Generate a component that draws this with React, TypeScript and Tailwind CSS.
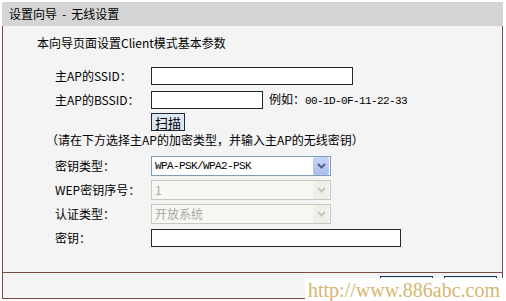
const cjk = "font-['Noto_Sans_CJK_SC','Noto_Sans',sans-serif]";
const mono = "font-['Liberation_Mono','Noto_Sans_CJK_SC',monospace]";

function Chevron({ color }: { color: string }) {
  return (
    <svg width="9" height="6" viewBox="0 0 9 6">
      <path d="M1 1 L4.5 4.5 L8 1" fill="none" stroke={color} strokeWidth="2" />
    </svg>
  );
}

function Select({ value, disabled, monoText }: { value: string; disabled?: boolean; monoText?: boolean }) {
  return (
    <div
      className={`w-[180px] h-[20px] flex items-center border ${
        disabled ? 'border-[#c9c7ba] bg-[#f7f7f4]' : 'border-[#7f9db9] bg-white'
      }`}
    >
      <span
        className={`flex-1 pl-[3px] leading-none ${
          monoText ? `${mono} text-[11px] tracking-[-0.6px]` : 'text-[12px]'
        } ${disabled ? 'text-[#a9a9a3]' : 'text-black'}`}
      >
        {value}
      </span>
      <div
        className={`w-[16px] h-[18px] mr-px flex items-center justify-center rounded-[2px] ${
          disabled ? 'bg-[#efefea]' : 'bg-gradient-to-b from-[#c6d5f8] to-[#a9bdee]'
        }`}
      >
        <Chevron color={disabled ? '#c9c7ba' : '#4d6185'} />
      </div>
    </div>
  );
}

function Row({ label, h = 'h-[24px]', children }: { label: string; h?: string; children: React.ReactNode }) {
  return (
    <div className={`flex items-center ${h}`}>
      <div className="w-[96px] text-[12px] text-black">{label}</div>
      {children}
    </div>
  );
}

const textInput = 'h-[18px] border border-[#1f2b2e] bg-white';

export default function App() {
  return (
    <div className={`relative w-[506px] h-[301px] bg-white overflow-hidden ${cjk}`}>
      <div className="ml-[2px] mt-[2px] w-[501px]">
        {/* title bar */}
        <div className="h-[24px] bg-[#d5d5d5] pl-[7px] flex items-center text-[12px] text-black">
          设置向导<span className="mx-[5px]">-</span>无线设置
        </div>

        {/* form */}
        <div className="h-[246px] border-x border-[#7b4b47] bg-[#f4f4f4] pt-[8px]">
          <div className="h-[18px] pl-[34px] flex items-center text-[12px] text-black">
            本向导页面设置Client模式基本参数
          </div>

          <div className="pl-[52px] mt-[12px]">
            <Row label="主AP的SSID：">
              <div className={`${textInput} w-[202px]`} />
            </Row>
            <Row label="主AP的BSSID：">
              <div className={`${textInput} w-[112px]`} />
              <span className="ml-[6px] text-[12px] text-black">
                例如：<span className={`${mono} text-[11px] tracking-[-0.6px]`}>00-1D-0F-11-22-33</span>
              </span>
            </Row>
            <Row label="" h="h-[20px]">
              <button className="w-[34px] h-[18px] border border-[#1f2b2e] bg-[#dce6f4] text-[13px] leading-none text-black flex items-center justify-center">
                扫描
              </button>
            </Row>
          </div>

          <div className="h-[16px] pl-[43px] flex items-center text-[12px] text-black whitespace-nowrap">
            （请在下方选择主AP的加密类型，并输入主AP的无线密钥）
          </div>

          <div className="pl-[52px] mt-[6px]">
            <Row label="密钥类型：">
              <Select value="WPA-PSK/WPA2-PSK" monoText />
            </Row>
            <Row label="WEP密钥序号：">
              <Select value="1" disabled />
            </Row>
            <Row label="认证类型：">
              <Select value="开放系统" disabled />
            </Row>
            <Row label="密钥：">
              <div className={`${textInput} w-[250px]`} />
            </Row>
          </div>
        </div>

        {/* footer */}
        <div className="h-[27px] border border-[#7b4b47] bg-[#f4f4f4] flex justify-end gap-[11px] pr-[5px] pt-[3px]">
          <div className="w-[53px] h-[20px] border border-[#1c3558] bg-[#e8eef8]" />
          <div className="w-[53px] h-[20px] border border-[#1c3558] bg-[#e8eef8]" />
        </div>
      </div>

      {/* watermark */}
      <div className="absolute left-[305px] top-[278px] w-[201px] h-[23px] bg-white flex items-center pl-[3px] font-['Liberation_Serif',serif] text-[20px] leading-none text-[#d6b770]">
        http://www.886abc.com
      </div>
    </div>
  );
}
